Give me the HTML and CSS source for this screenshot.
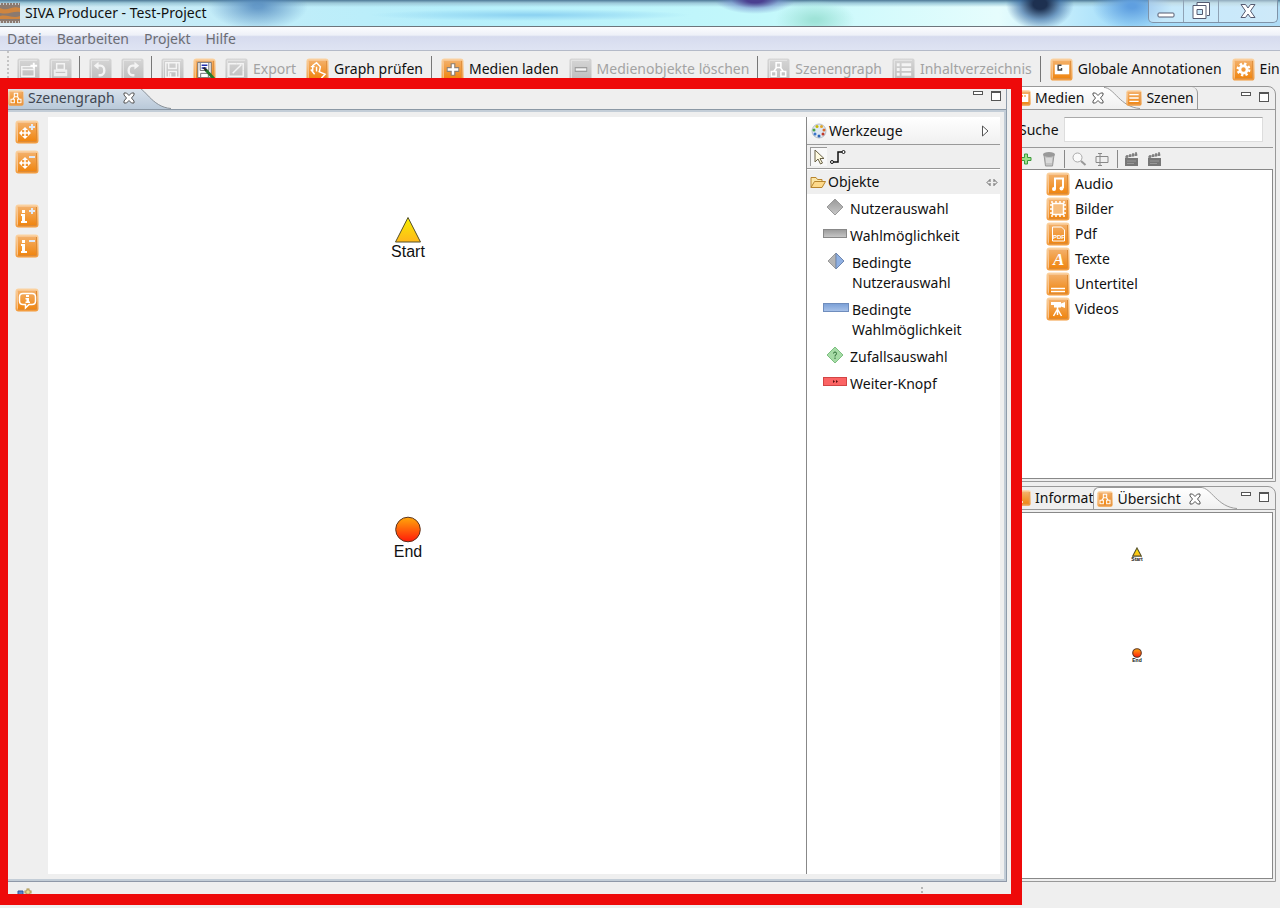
FILE: index.html
```html
<!DOCTYPE html>
<html lang="de">
<head>
<meta charset="utf-8">
<title>SIVA Producer - Test-Project</title>
<link rel="stylesheet" href="styles.css">
</head>
<body>
<svg class="defs" aria-hidden="true">
  <defs>
    <linearGradient id="orange" x1="0" y1="0" x2="0" y2="1"><stop offset="0" stop-color="#f3b06a"/><stop offset="1" stop-color="#f0850f"/></linearGradient>
    <linearGradient id="orange-rim" x1="0" y1="0" x2="0" y2="1"><stop offset="0" stop-color="#fbd3a2"/><stop offset="1" stop-color="#f39a3a"/></linearGradient>
    <linearGradient id="gray" x1="0" y1="0" x2="0" y2="1"><stop offset="0" stop-color="#d6d6d6"/><stop offset="1" stop-color="#bdbdbd"/></linearGradient>
    <linearGradient id="sun" x1="0" y1="0" x2="0" y2="1"><stop offset="0" stop-color="#f6ee00"/><stop offset="1" stop-color="#ffb81c"/></linearGradient>
    <linearGradient id="fire" x1="0" y1="0" x2="0" y2="1"><stop offset="0" stop-color="#ffa80a"/><stop offset="1" stop-color="#ff1a0a"/></linearGradient>
    <linearGradient id="stone" x1="0" y1="0" x2="0" y2="1"><stop offset="0" stop-color="#999"/><stop offset="1" stop-color="#c8c8c8"/></linearGradient>
    <linearGradient id="sky" x1="0" y1="0" x2="0" y2="1"><stop offset="0" stop-color="#7a9fd6"/><stop offset="1" stop-color="#a9c3ea"/></linearGradient>
    <linearGradient id="tab-blue" x1="0" y1="0" x2="0" y2="1"><stop offset="0" stop-color="#dde5ee"/><stop offset="1" stop-color="#b9c9d9"/></linearGradient>
    <linearGradient id="tab-white" x1="0" y1="0" x2="0" y2="1"><stop offset="0" stop-color="#fff"/><stop offset="1" stop-color="#f0f0f0"/></linearGradient>
  </defs>
  <symbol id="tile" viewBox="0 0 24 24"><rect x="0.5" y="0.5" width="23" height="23" rx="3" fill="url(#orange-rim)"/><rect x="2.5" y="2.5" width="19" height="19" rx="1" fill="url(#orange)" stroke="#f7c591"/><path d="M21.5 3v18.500H3" fill="none" stroke="#dd8a35"/></symbol>
  <symbol id="tile-off" viewBox="0 0 24 24"><rect x="0.500" y="0.500" width="23" height="23" rx="2" fill="url(#gray)"/><path d="M2.500 21V2.500H21" fill="none" stroke="#e6e6e6"/></symbol>
  <symbol id="close" viewBox="0 0 12 12"><path d="M1 1h2.500L6 3.500 8.500 1H11v2L8.500 6 11 9v2H8.500L6 8.500 3.500 11H1V9l2.500-3L1 3z" fill="#fff" stroke="#555"/></symbol>
  <symbol id="graph" viewBox="0 0 24 24"><path d="M9.500 5h5v5h-5zM4.500 14h5v5h-5zM14.500 14h5v5h-5zM10 10l-3 4M14 10l3 4" fill="none" stroke="#fff" stroke-width="1.600"/></symbol>
  <symbol id="move" viewBox="0 0 24 24"><path d="M5 13h10M10 8v10" stroke="#fff" stroke-width="1.500"/><path d="M10 7l3 3H7zM10 19l3-3H7zM4 13l3-3v6zM16 13l-3-3v6z" fill="#fff"/></symbol>
  <symbol id="info" viewBox="0 0 24 24"><path d="M7 6h3v3H7zM6 10h4v7h2v2H6v-2h1v-5H6z" fill="#fff"/></symbol>
  <symbol id="plus" viewBox="0 0 24 24"><path d="M14 7h6M17 4v6" stroke="#dfe9f7" stroke-width="2"/></symbol>
  <symbol id="minus" viewBox="0 0 24 24"><path d="M14 7h6" stroke="#dfe9f7" stroke-width="2"/></symbol>
  <symbol id="clap" viewBox="0 0 16 16"><path d="M1 7h13v8H1z" fill="#777"/><path d="M1 5l12-3 .8 2.500L1 7z" fill="#aaa"/><path d="M3 7V4M6 6V3M9 5.500V2M12 5V1" stroke="#555"/><path d="M3 10h9M3 12.500h7" stroke="#999"/></symbol>
</svg>

<header class="titlebar">
  <svg class="app-icon" viewBox="0 0 20 20"><path d="M0 0h20v20H0z" fill="#8b7a70"/><path d="M0 5c8 4 12-3 20 0v4c-8-1-10 3-20 1zM0 13c8-2 12 3 20 0v3H0z" fill="#cf853f"/><path d="M0 1h20M0 19h20" stroke="#dde4e8" stroke-width="1.500" stroke-dasharray="1 2"/></svg>
  <h1 class="title">SIVA Producer - Test-Project</h1>
  <div class="window-buttons">
    <button class="win" aria-label="Minimieren"><svg width="18" height="20" viewBox="0 0 18 20"><rect x="1" y="12" width="16" height="4" rx="1" fill="#fff" stroke="#555a70"/></svg></button>
    <button class="win" aria-label="Wiederherstellen"><svg width="20" height="20" viewBox="0 0 20 20"><path d="M6 4V1.500h12.500v13H16" fill="#fff" stroke="#555a70"/><path d="M2 4.500h13v13H2zM6 8.500v5h5.500v-5z" fill="#fff" fill-rule="evenodd" stroke="#555a70"/></svg></button>
    <button class="win win-close" aria-label="Schließen"><svg width="16" height="16" viewBox="0 0 16 16"><path d="M1 1.500h4.500L8 5l2.500-3.500H15L10.500 8l4.500 6.500h-4.500L8 11l-2.500 3.500H1L5.500 8z" fill="#fff" stroke="#555a70"/></svg></button>
  </div>
</header>

<nav class="menubar">
  <button>Datei</button><button>Bearbeiten</button><button>Projekt</button><button>Hilfe</button>
</nav>

<div class="toolbar" role="toolbar">
  <button class="tool off" aria-label="Neu"><svg class="ico" viewBox="0 0 24 24"><use href="#tile-off"/><path d="M5 9h13v10H5zM5 12h13" fill="none" stroke="#f4f4f4" stroke-width="1.500"/><path d="M14 8h7M17.500 5v6" stroke="#fff" stroke-width="2"/></svg></button>
  <button class="tool off" aria-label="Öffnen"><svg class="ico" viewBox="0 0 24 24"><use href="#tile-off"/><path d="M8 6h8v6H8z" fill="none" stroke="#f4f4f4" stroke-width="1.500"/><path d="M5 12h14v7H5z" fill="#eee"/><path d="M7 15h10" stroke="#bbb"/></svg></button>
  <span class="sep"></span>
  <button class="tool off" aria-label="Rückgängig"><svg class="ico" viewBox="0 0 24 24"><use href="#tile-off"/><path d="M9 8h3a4 5 0 0 1 0 10h-2" fill="none" stroke="#f4f4f4" stroke-width="2.500"/><path d="M5 8l5-4v8z" fill="#f4f4f4"/></svg></button>
  <button class="tool off" aria-label="Wiederholen"><svg class="ico" viewBox="0 0 24 24"><use href="#tile-off"/><path d="M15 8h-3a4 5 0 0 0 0 10h2" fill="none" stroke="#f4f4f4" stroke-width="2.500"/><path d="M19 8l-5-4v8z" fill="#f4f4f4"/></svg></button>
  <span class="sep"></span>
  <button class="tool off" aria-label="Speichern"><svg class="ico" viewBox="0 0 24 24"><use href="#tile-off"/><path d="M5 5h14v15H5z" fill="none" stroke="#f4f4f4" stroke-width="1.500"/><path d="M8 5v6h8V5M8 20v-6h8v6M10 16v4" fill="none" stroke="#f4f4f4" stroke-width="1.500"/></svg></button>
  <button class="tool" aria-label="Speichern unter"><svg class="ico" viewBox="0 0 24 24"><use href="#tile"/><path d="M5 4.500h14v16H5z" fill="#fff" stroke="#6b6b70"/><path d="M7.500 5v8h9V5M8 20v-4h8v4" fill="none" stroke="#6b6b70"/><path d="M9 7.500h6M9 10.500h5" stroke="#2430b0" stroke-width="1.500"/><path d="M13 12l9 10" stroke="#257a2c" stroke-width="3"/><path d="M11 10l3 3" stroke="#222" stroke-width="2"/></svg></button>
  <button class="tool off"><svg class="ico" viewBox="0 0 24 24"><use href="#tile-off"/><path d="M12 6H4v13h15v-6" fill="none" stroke="#f4f4f4" stroke-width="1.500"/><path d="M8 16l9-9M12 6h7v7" fill="none" stroke="#f4f4f4" stroke-width="1.500"/></svg>Export</button>
  <button class="tool"><svg class="ico" viewBox="0 0 24 24"><use href="#tile"/><path d="M7 15V8l4-3 4 4-1 5M13 14l7 3-4 4M5 12l4 5M5 9h4M11 9v5" fill="none" stroke="#fff" stroke-width="1.500"/></svg>Graph prüfen</button>
  <span class="sep"></span>
  <button class="tool"><svg class="ico" viewBox="0 0 24 24"><use href="#tile"/><path d="M6 12h13M12.500 5.500v13" stroke="#8f8175" stroke-width="5"/><path d="M7 12h11M12.500 6.500v11" stroke="#fff" stroke-width="2.500"/></svg>Medien laden</button>
  <button class="tool off"><svg class="ico" viewBox="0 0 24 24"><use href="#tile-off"/><path d="M6 12h13" stroke="#999" stroke-width="5"/><path d="M7 12h11" stroke="#f4f4f4" stroke-width="2.500"/></svg>Medienobjekte löschen</button>
  <span class="sep"></span>
  <button class="tool off"><svg class="ico" viewBox="0 0 24 24"><use href="#tile-off"/><use href="#graph"/></svg>Szenengraph</button>
  <button class="tool off"><svg class="ico" viewBox="0 0 24 24"><use href="#tile-off"/><path d="M5 7h3M5 12h3M5 17h3M10 7h10M10 12h10M10 17h10" stroke="#f4f4f4" stroke-width="3"/></svg>Inhaltverzeichnis</button>
  <span class="sep"></span>
  <button class="tool"><svg class="ico" viewBox="0 0 24 24"><use href="#tile"/><path d="M5 7h15v10H5z" fill="#fff"/><path d="M12 7.500H8.500v5H12v-2" fill="none" stroke="#444" stroke-width="1.500"/></svg>Globale Annotationen</button>
  <button class="tool"><svg class="ico" viewBox="0 0 24 24"><use href="#tile"/><circle cx="12" cy="12" r="3.800" fill="none" stroke="#fff" stroke-width="3"/><circle cx="12" cy="12" r="6" fill="none" stroke="#fff" stroke-width="2.500" stroke-dasharray="2.400 2.300"/></svg>Ein</button>
</div>

<main class="workbench">
  <section class="editor">
    <div class="tabs">
      <div class="tab-active blue">
        <svg class="ico-s" viewBox="0 0 24 24"><use href="#tile"/><use href="#graph"/></svg>
        <span>Szenengraph</span>
        <button class="x" aria-label="Schließen"><svg><use href="#close"/></svg></button>
      </div>
      <svg class="curve" viewBox="0 0 36 23" preserveAspectRatio="none"><path d="M0 0C10 0 16 21 36 22.500V23H0z" fill="url(#tab-blue)"/><path d="M0 .5C10 .5 16 21 36 22.500" fill="none" stroke="#8b9299"/></svg>
      <div class="pane-buttons"><button class="min" aria-label="Minimieren"></button><button class="max" aria-label="Maximieren"></button></div>
    </div>
    <div class="editor-body">
      <aside class="side">
        <button aria-label="Vergrößern"><svg class="ico" viewBox="0 0 24 24"><use href="#tile"/><use href="#move"/><use href="#plus"/></svg></button>
        <button aria-label="Verkleinern"><svg class="ico" viewBox="0 0 24 24"><use href="#tile"/><use href="#move"/><use href="#minus"/></svg></button>
        <button class="group" aria-label="Mehr Information"><svg class="ico" viewBox="0 0 24 24"><use href="#tile"/><use href="#info"/><use href="#plus"/></svg></button>
        <button aria-label="Weniger Information"><svg class="ico" viewBox="0 0 24 24"><use href="#tile"/><use href="#info"/><use href="#minus"/></svg></button>
        <button class="group" aria-label="Hinweis"><svg class="ico" viewBox="0 0 24 24"><use href="#tile"/><path d="M8 5.500h9q3.500 0 3.500 3.500v4q0 3.500-3.500 3.500h-3l-3.500 3.500v-3.500H8q-3.500 0-3.500-3.500V9q0-3.500 3.500-3.500z" fill="none" stroke="#fff" stroke-width="1.500"/><path d="M11 7h3v2h-3zM10.500 10H14v3.500h1V15h-4.500v-1.500h1v-2h-1z" fill="#fff"/></svg></button>
      </aside>
      <div class="canvas">
        <div class="node start"><svg width="28" height="27" viewBox="0 0 28 27"><path d="M14 1.500L26.500 26h-25z" fill="url(#sun)" stroke="#55502a"/></svg>Start</div>
        <div class="node end"><svg width="28" height="27" viewBox="0 0 28 27"><circle cx="14" cy="13.500" r="12.300" fill="url(#fire)" stroke="#5c3320"/></svg>End</div>
      </div>
      <aside class="palette">
        <div class="pal-head">
          <svg width="16" height="16" viewBox="0 0 16 16"><circle cx="8" cy="8" r="7" fill="#dfe8f2" stroke="#b7bfc9"/><circle cx="6" cy="3.500" r="1.500" fill="#c8b800"/><circle cx="10.500" cy="3.500" r="1.500" fill="#e0a52a"/><circle cx="3" cy="7" r="1.500" fill="#49a24a"/><circle cx="13" cy="7" r="1.500" fill="#d96a2b"/><circle cx="4" cy="11" r="1.500" fill="#3a75c8"/><circle cx="8" cy="13" r="1.500" fill="#2d63b5"/><circle cx="12" cy="11" r="1.500" fill="#c0392b"/></svg>
          <span>Werkzeuge</span>
          <button aria-label="Palette einklappen"><svg width="8" height="12" viewBox="0 0 8 12"><path d="M1.500 1v10L7 6z" fill="#fff" stroke="#555"/></svg></button>
        </div>
        <div class="pal-tools">
          <button class="pressed" aria-label="Auswahl"><svg width="16" height="18" viewBox="0 0 16 18"><path d="M4 2v12l3-3 2.500 5 2-1L9 10.500h4z" fill="#fffbe0" stroke="#6a6248"/></svg></button>
          <button aria-label="Verbindung"><svg width="18" height="18" viewBox="0 0 18 18"><path d="M4 14h5V4h4" fill="none" stroke="#111" stroke-width="1.500"/><circle cx="3" cy="14" r="1.500" fill="#fff" stroke="#111"/><circle cx="14.500" cy="4" r="1.500" fill="#fff" stroke="#111"/></svg></button>
        </div>
        <div class="pal-group">
          <svg width="16" height="14" viewBox="0 0 16 14"><path d="M1 12.500v-10h5l1.500 2H12v3" fill="#fbe6a6" stroke="#b8842d"/><path d="M1 12.500L4.500 6.500h11L12 12.500z" fill="#fdd98a" stroke="#b8842d"/></svg>
          <span>Objekte</span>
          <svg width="12" height="9" viewBox="0 0 12 9"><path d="M4.500 1L1 4.500 4.500 8M7.500 1L11 4.500 7.500 8M3 3h2M7 3h2M3 6h2M7 6h2" fill="none" stroke="#666"/></svg>
        </div>
        <ul class="pal-list">
          <li><svg class="shape" viewBox="0 0 24 20"><path d="M12 0l8 8-8 8-8-8z" fill="url(#stone)" stroke="#999"/></svg><span>Nutzerauswahl</span></li>
          <li><svg class="shape" viewBox="0 0 24 20"><rect x="0.500" y="3.500" width="23" height="8" fill="url(#stone)" stroke="#888"/></svg><span>Wahlmöglichkeit</span></li>
          <li class="wide"><svg class="shape" viewBox="0 0 26 20"><path d="M13 0v16L5 8z" fill="#b5b5b5" stroke="#999"/><path d="M13 0v16l8-8z" fill="#8fb0e2" stroke="#6f86ad"/></svg><span>Bedingte<br>Nutzerauswahl</span></li>
          <li class="wide"><svg class="shape" viewBox="0 0 26 20"><rect x="0.500" y="3.500" width="25" height="8" fill="url(#sky)" stroke="#6f8dbd"/></svg><span>Bedingte<br>Wahlmöglichkeit</span></li>
          <li><svg class="shape" viewBox="0 0 24 20"><path d="M12 0l8 8-8 8-8-8z" fill="#a6dba6" stroke="#7cbf80"/><path d="M10.500 6.500q0-1.500 1.500-1.500t1.500 1.500-1.500 2v1M12 10.500V12" fill="none" stroke="#2c6a34"/></svg><span>Zufallsauswahl</span></li>
          <li><svg class="shape" viewBox="0 0 24 20"><rect x="0.500" y="3.500" width="23" height="8" fill="#fb6464" stroke="#d24545"/><path d="M10 6l2 1.500L10 9zM13 6l2 1.500L13 9z" fill="#5c1010"/></svg><span>Weiter-Knopf</span></li>
        </ul>
      </aside>
    </div>
  </section>

  <div class="views">
    <section class="view">
      <div class="tabs">
        <div class="tab-active">
          <svg class="ico-s" viewBox="0 0 24 24"><use href="#tile"/><path d="M4 6h16v12H4z" fill="#fff"/><path d="M6 9h2M10 9h2M14 9h2" stroke="#f0850f" stroke-width="2"/></svg>
          <span>Medien</span>
          <button class="x" aria-label="Schließen"><svg><use href="#close"/></svg></button>
        </div>
        <svg class="curve" viewBox="0 0 36 23" preserveAspectRatio="none"><path d="M0 0C10 0 16 21 36 22.500V23H0z" fill="url(#tab-white)"/><path d="M0 .5C10 .5 16 21 36 22.500" fill="none" stroke="#999"/></svg>
        <div class="tab last">
          <svg class="ico-s" viewBox="0 0 24 24"><use href="#tile"/><path d="M5 7h14M5 12h14M5 17h14" stroke="#fff" stroke-width="2"/></svg>
          <span>Szenen</span>
        </div>
        <div class="pane-buttons"><button class="min" aria-label="Minimieren"></button><button class="max" aria-label="Maximieren"></button></div>
      </div>
      <div class="search"><label for="suche">Suche</label><input id="suche" type="text"></div>
      <div class="view-tools">
        <button aria-label="Hinzufügen"><svg width="16" height="16" viewBox="0 0 16 16"><path d="M6.500 3h3v3.500H13v3H9.500V13h-3V9.500H3v-3h3.500z" fill="#9ee08a" stroke="#3d9a3d"/></svg></button>
        <button aria-label="Löschen"><svg width="16" height="16" viewBox="0 0 16 16"><path d="M3 4l1.500 11h7L13 4z" fill="#c5c5c5" stroke="#999"/><ellipse cx="8" cy="3.500" rx="6" ry="2.500" fill="#999"/><path d="M6 7v5M8 7v5M10 7v5" stroke="#eee"/></svg></button>
        <span class="sep-s"></span>
        <button aria-label="Suchen"><svg width="16" height="16" viewBox="0 0 16 16"><circle cx="6.500" cy="6.500" r="4.500" fill="#fafafa" stroke="#aaa"/><path d="M10 10l4.500 4" stroke="#999" stroke-width="2"/></svg></button>
        <button aria-label="Umbenennen"><svg width="16" height="16" viewBox="0 0 16 16"><path d="M2 5.500h12v6H2zM4 2.500h4M4 14.500h4M6 2.500v12" fill="none" stroke="#888"/></svg></button>
        <span class="sep-s"></span>
        <button aria-label="Szene anlegen"><svg width="16" height="16"><use href="#clap"/></svg></button>
        <button aria-label="Szene öffnen"><svg width="16" height="16"><use href="#clap"/></svg></button>
      </div>
      <ul class="tree">
        <li><svg class="ico" viewBox="0 0 24 24"><use href="#tile"/><path d="M9 17V6.500h8V16" fill="none" stroke="#fff" stroke-width="2"/><circle cx="8" cy="17" r="2" fill="#fff"/><circle cx="15.500" cy="16.500" r="2" fill="#fff"/></svg>Audio</li>
        <li><svg class="ico" viewBox="0 0 24 24"><use href="#tile"/><rect x="6.500" y="6.500" width="11" height="11" fill="#f7bd7d" stroke="#fff" stroke-width="1.500"/><rect x="5" y="5" width="14" height="14" fill="none" stroke="#fff" stroke-width="1.500" stroke-dasharray="2 2"/></svg>Bilder</li>
        <li><svg class="ico" viewBox="0 0 24 24"><use href="#tile"/><path d="M6.500 5h9l3 3v11h-12z" fill="none" stroke="#fff"/><text class="pdf" x="7" y="17">PDF</text></svg>Pdf</li>
        <li><svg class="ico" viewBox="0 0 24 24"><use href="#tile"/><text class="letter" x="7" y="18">A</text></svg>Texte</li>
        <li><svg class="ico" viewBox="0 0 24 24"><use href="#tile"/><path d="M5 16.500h14M5 19.500h14" stroke="#fff" stroke-width="1.500"/></svg>Untertitel</li>
        <li><svg class="ico" viewBox="0 0 24 24"><use href="#tile"/><path d="M5 5h10v1.500L19 5v6l-4-1.500v1H8V8H5z" fill="#fff"/><path d="M11.500 10v8M11.500 12l-4 7M11.500 12l4 7" stroke="#fff" stroke-width="1.500"/></svg>Videos</li>
      </ul>
    </section>

    <section class="view">
      <div class="tabs">
        <div class="tab">
          <svg class="ico-s" viewBox="0 0 24 24"><use href="#tile"/><use href="#info"/></svg>
          <span>Informat</span>
        </div>
        <div class="tab-active framed">
          <svg class="ico-s" viewBox="0 0 24 24"><use href="#tile"/><use href="#graph"/></svg>
          <span>Übersicht</span>
          <button class="x" aria-label="Schließen"><svg><use href="#close"/></svg></button>
        </div>
        <svg class="curve" viewBox="0 0 36 23" preserveAspectRatio="none"><path d="M0 0C10 0 16 21 36 22.500V23H0z" fill="url(#tab-white)"/><path d="M0 .5C10 .5 16 21 36 22.500" fill="none" stroke="#999"/></svg>
        <div class="pane-buttons"><button class="min" aria-label="Minimieren"></button><button class="max" aria-label="Maximieren"></button></div>
      </div>
      <div class="overview">
        <div class="mini mini-start"><svg width="10" height="10" viewBox="0 0 28 27"><path d="M14 2L26 25H2z" fill="url(#sun)" stroke="#55502a" stroke-width="3"/></svg>Start</div>
        <div class="mini mini-end"><svg width="10" height="10" viewBox="0 0 28 27"><circle cx="14" cy="13.500" r="12" fill="url(#fire)" stroke="#5c3320" stroke-width="3"/></svg>End</div>
      </div>
    </section>
  </div>
  <div class="highlight"></div>
</main>

<footer class="statusbar">
  <svg width="16" height="12" viewBox="0 0 16 12"><path d="M1 4h5v5H1z" fill="#5b86c9" stroke="#2f559b"/><path d="M11 1.500v7M7.500 5h7" stroke="#a8904a" stroke-width="3"/><path d="M11 2.500v5M8.500 5h5" stroke="#fff4b0"/></svg>
  <span class="grip"></span>
</footer>
</body>
</html>
```

FILE: styles.css
```css
* { box-sizing: border-box; }
body {
  margin: 0;
  height: 100vh;
  display: flex;
  flex-direction: column;
  overflow: hidden;
  background: #efefef;
  color: #111;
  font: 14px/20px "Noto Sans", "Open Sans", sans-serif;
}
button {
  font: inherit;
  color: inherit;
  background: none;
  border: 0;
  padding: 0;
  display: flex;
  align-items: center;
}
ul { list-style: none; margin: 0; padding: 0; }
svg { display: block; flex: none; }
.defs { position: absolute; width: 0; height: 0; }
.ico { width: 24px; height: 24px; }
.ico-s { width: 16px; height: 16px; }

/* Title bar */
.titlebar {
  flex: none;
  height: 27px;
  display: flex;
  align-items: center;
  gap: 5px;
  border-bottom: 1px solid #6d757c;
  background:
    radial-gradient(ellipse 34px 26px at 1040px 4px, #1d3050 20%, #2f5f9a99 60%, transparent),
    radial-gradient(ellipse 40px 14px at 755px 0, #4b3f90 20%, #6f86c888 60%, transparent),
    radial-gradient(ellipse 50px 24px at 258px 6px, #4f86bdcc 10%, transparent),
    radial-gradient(ellipse 40px 24px at 1132px 6px, #5f9fe0 10%, transparent),
    radial-gradient(ellipse 40px 20px at 815px 20px, #9fe3d8 10%, transparent),
    radial-gradient(ellipse 160px 6px at 530px 15px, #8fd4f2 10%, transparent),
    linear-gradient(#4d7896 0, #9cc8d8 3px, transparent 7px),
    linear-gradient(90deg, #d8eaf2 0, #c4ecf8 16%, #b6effb 35%, #c3f8fb 60%, #e6fdfd 78%, #a0dcfa 88%, #b0dcf6 100%);
}
.app-icon { width: 20px; height: 20px; }
.title { flex: 1; margin: 0; font-size: 14px; font-weight: 400; }
.window-buttons {
  display: flex;
  align-self: flex-start;
  height: 23px;
  margin-right: 2px;
  border: 1px solid #7f93a8;
  border-top: 0;
  border-radius: 0 0 5px 5px;
  background: #ffffff60;
}
.win { width: 35px; justify-content: center; border-right: 1px solid #8fa2b5; }
.win-close { width: 58px; border-right: 0; }

/* Menu bar */
.menubar {
  flex: none;
  height: 24px;
  padding: 0 7px;
  display: flex;
  align-items: center;
  gap: 15px;
  color: #6b6d74;
  border-bottom: 1px solid #b4bac8;
  background: linear-gradient(#fbfcfe 0, #eef1f8 35%, #d6dbee 42%, #dfe4f3 100%);
}

/* Toolbar */
.toolbar {
  flex: none;
  height: 35px;
  display: flex;
  align-items: center;
  gap: 10px;
  padding: 1px 0 0 8px;
  margin-left: 7px;
  border-left: 2px dotted #c4c4c4;
  overflow: hidden;
}
.tool { flex: none; gap: 6px; white-space: nowrap; }
.tool .ico { width: 23px; height: 23px; margin-right: -1px; }
.side .ico { width: 24px; height: 24px; }
.tool.off { color: #a3a3a3; }
.sep { flex: none; width: 1px; height: 26px; margin: 0 -1px 0 -2px; background: #777; }

/* Workbench */
.workbench {
  position: relative;
  flex: 1;
  min-height: 0;
  display: flex;
  gap: 4px;
  padding: 0 4px 0 5px;
}
.highlight {
  position: absolute;
  inset: -8px 258px -23px 0;
  border: 11px solid #ee0a0a;
  border-left-width: 8px;
  pointer-events: none;
  z-index: 2;
}
.tabs { flex: none; height: 23px; display: flex; border-bottom: 1px solid #999; }
.tab-active, .tab { display: flex; align-items: center; gap: 4px; padding-left: 3px; }
.tab-active { background: linear-gradient(#fff, #f0f0f0); }
.tab-active.blue { background: linear-gradient(#dde5ee, #b9c9d9); color: #3f4650; }
.tab-active.framed { border: 1px solid #999; border-width: 1px 0 0 1px; border-radius: 6px 0 0 0; }
.tab.last { border-right: 1px solid #999; border-radius: 0 6px 0 0; padding-right: 3px; margin-left: -17px; }
.x { margin-left: 4px; }
.x svg { width: 12px; height: 12px; }
.curve { width: 36px; height: 22px; }
.pane-buttons { display: flex; gap: 8px; margin-left: auto; padding: 5px 6px 0 0; }
.min { width: 10px; height: 4px; border: 1px solid #555; background: #fff; }
.max { width: 10px; height: 10px; border: 1px solid #555; border-top-width: 2px; background: #fff; }

.editor {
  flex: 1;
  min-width: 0;
  display: flex;
  flex-direction: column;
  border-right: 1px solid #8e9cab;
  border-bottom: 1px solid #8f98a8;
}
.editor .tabs { height: 24px; border-bottom-color: #8b98a5; }
.editor .curve { height: 23px; }
.editor .pane-buttons { padding-right: 5px; }
.editor-body {
  flex: 1;
  min-height: 0;
  display: flex;
  padding: 5px 4px 5px 0;
  border: 2px solid #c3cdd7;
  border-left: 0;
}
.side { width: 43px; padding: 3px 0 0 10px; display: flex; flex-direction: column; gap: 6px; }
.side .group { margin-top: 24px; }
.canvas { flex: 1; position: relative; background: #fff; }
.node {
  position: absolute;
  width: 80px;
  display: flex;
  flex-direction: column;
  align-items: center;
  font: 16px/18px "Liberation Sans", Arial, sans-serif;
}
.start { left: 320px; top: 99px; }
.end { left: 320px; top: 399px; }

/* Palette */
.palette { width: 194px; background: #fff; border-left: 1px solid #888; }
.pal-head {
  height: 28px;
  display: flex;
  align-items: center;
  gap: 2px;
  padding: 0 11px 0 4px;
  background: linear-gradient(#fff, #f0f0f0);
  border-bottom: 1px solid #999;
}
.pal-head button { margin-left: auto; }
.pal-tools { height: 24px; display: flex; align-items: center; gap: 2px; padding: 2px 3px; background: #efefef; border-bottom: 1px solid #999; }
.pal-tools button { height: 19px; }
.pal-tools .pressed { border: 1px solid #999; border-width: 1px 0 0 1px; background: #f8f8f8; }
.pal-group { height: 24px; display: flex; align-items: center; gap: 2px; padding: 0 2px 0 3px; margin-top: 1px; background: #efefef; }
.pal-group span { flex: 1; }
.pal-list { padding: 5px 0 0 16px; display: flex; flex-direction: column; gap: 7px; }
.pal-list li { display: flex; gap: 3px; }
.shape { width: 24px; height: 20px; }
.wide .shape { width: 26px; }

/* Right-hand views */
.views { flex: none; width: 265px; display: flex; flex-direction: column; gap: 4px; }
.view {
  flex: 1;
  min-height: 0;
  display: flex;
  flex-direction: column;
  border: 1px solid #999;
  border-radius: 0 8px 0 0;
}
.search { display: flex; align-items: center; gap: 5px; padding: 7px 12px 5px 7px; }
.search input { flex: 1; min-width: 0; height: 25px; border: 1px solid #ddd; border-top-color: #aaa; background: #fff; font: inherit; padding: 0 4px; }
.view-tools { height: 22px; display: flex; align-items: center; gap: 7px; margin: 0 2px; padding-left: 4px; border-top: 1px solid #999; }
.sep-s { width: 1px; height: 18px; background: #888; margin: 0 -1px 0 0; }
.tree { flex: 1; margin: 0 2px 2px; padding: 1px 0 0 31px; background: #fff; border: 1px solid #888; }
.tree li { display: flex; align-items: center; gap: 5px; height: 25px; }
.pdf { font: bold 6px "Liberation Sans", sans-serif; fill: #fff; }
.letter { font: italic bold 17px "Liberation Serif", serif; fill: #fff; }
.overview { flex: 1; position: relative; margin: 2px; background: #fff; border: 1px solid #888; }
.mini {
  position: absolute;
  width: 24px;
  display: flex;
  flex-direction: column;
  align-items: center;
  font: bold 5px/5px "Liberation Sans", Arial, sans-serif;
}
.mini-start { left: 110px; top: 34px; }
.mini-end { left: 110px; top: 135px; }

/* Status bar */
.statusbar { flex: none; height: 26px; display: flex; align-items: flex-start; padding: 5px 357px 0 17px; }
.grip { margin-left: auto; height: 14px; border-left: 2px dotted #b5b5b5; }
```
